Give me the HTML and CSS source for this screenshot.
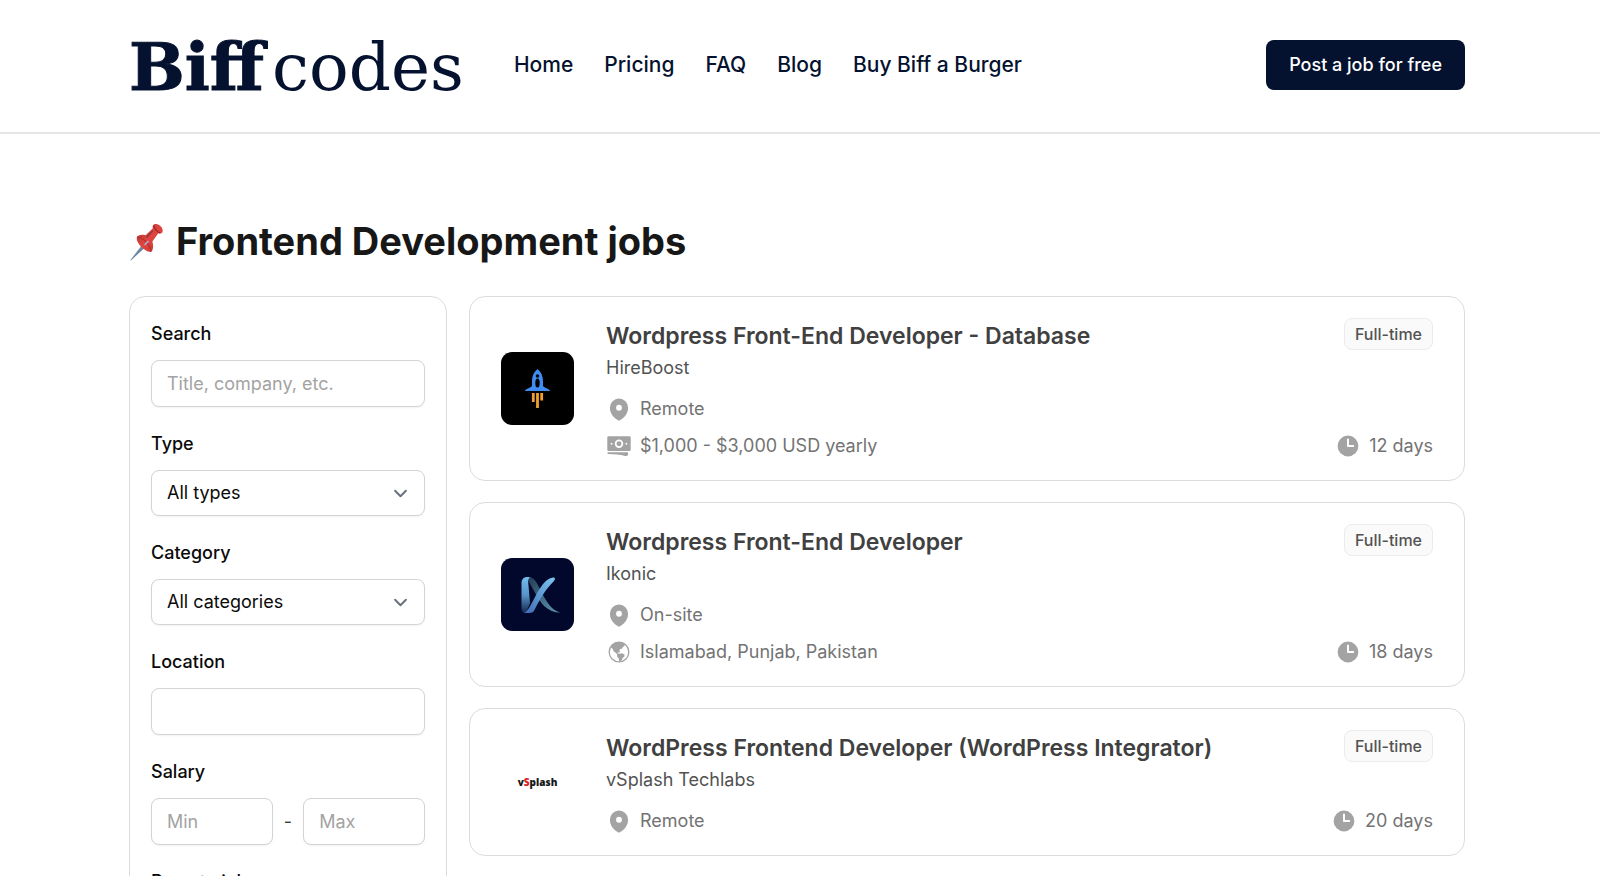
FILE: index.html
```html
<!DOCTYPE html>
<html lang="en">
<head>
<meta charset="utf-8">
<meta name="viewport" content="width=device-width, initial-scale=1">
<title>Frontend Development jobs | Biff codes</title>
<link rel="stylesheet" href="styles.css">
</head>
<body>
<svg class="sprite" aria-hidden="true">
  <symbol id="pin" viewBox="0 0 20 20"><path fill-rule="evenodd" d="M9.69 18.933l.003.001C9.89 19.02 10 19 10 19s.11.02.308-.066l.002-.001.006-.003.018-.008a5.741 5.741 0 00.281-.14c.186-.096.446-.24.757-.433.62-.384 1.445-.966 2.274-1.765C15.302 14.988 17 12.493 17 9A7 7 0 103 9c0 3.492 1.698 5.988 3.355 7.584a13.731 13.731 0 002.273 1.765 11.842 11.842 0 00.976.544l.062.029.018.008.006.003zM10 11.25a2.25 2.25 0 100-4.5 2.25 2.25 0 000 4.5z"/></symbol>
  <symbol id="cash" viewBox="0 0 20 20"><path fill-rule="evenodd" d="M2 2.500h16a1 1 0 011 1v9.300a1 1 0 01-1 1H2a1 1 0 01-1-1V3.500a1 1 0 011-1zM13.250 8.250a3.250 3.250 0 11-6.500 0 3.250 3.250 0 016.500 0zM4.300 8.950a.7.7 0 100-1.400.7.7 0 000 1.400zm12.100-.7a.7.7 0 11-1.400 0 .7.7 0 011.400 0z"/><circle cx="10" cy="8.250" r="1.900"/><path d="M1.750 14.900c-.9 0-.9 1.300 0 1.300 4.600 0 8.900.550 13 1.500 1.300.3 2.300-.4 2.300-1.500v-.7q0-.6-.6-.6z"/></symbol>
  <symbol id="globe" viewBox="0 0 20 20"><circle cx="10" cy="10" r="7.550" fill="none" stroke="currentColor" stroke-width="1"/><path d="M3.600 6.300C5 3.700 7.300 2.300 10 2.300c1.800 0 3.200.4 4.400 1.200l-.2 1.800-1.300.9-.4 1.200-1.300.3-1.100 1.200.8.7-.5.8-1.300-.3-.3.900 1.600.3 1.700-.4 2.200 1.100-.3 1.700-1.200 1-.5 1.500-1.300 1.200-.9-.3-.3-2.300-1.300-1.300.1-1.600-1-1.100-1.700-1.400-.7-1.800z"/></symbol>
  <symbol id="clock" viewBox="0 0 20 20"><path fill-rule="evenodd" d="M10 18a8 8 0 100-16 8 8 0 000 16zm.75-13a.75.75 0 00-1.5 0v5c0 .414.336.75.75.75h4a.75.75 0 000-1.5h-3.25V5z"/></symbol>
</svg>

<header class="header">
  <div class="container header-row">
    <a class="brand" href="#" aria-label="Biff codes"><span class="brand-bold">Biff</span><span class="brand-light">codes</span></a>
    <nav class="nav" aria-label="Main">
      <a href="#">Home</a>
      <a href="#">Pricing</a>
      <a href="#">FAQ</a>
      <a href="#">Blog</a>
      <a href="#">Buy Biff a Burger</a>
    </nav>
    <button class="post-button" type="button">Post a job for free</button>
  </div>
</header>

<main class="container main">
  <h1 class="title">
    <svg class="pushpin" viewBox="0 0 40 40" aria-hidden="true">
      <defs>
        <linearGradient id="red" x1="0" y1="0" x2="1" y2="1"><stop offset="0" stop-color="#a93230"/><stop offset=".5" stop-color="#e2453e"/><stop offset="1" stop-color="#c22f2d"/></linearGradient>
        <linearGradient id="steel" x1="0" y1="0" x2="1" y2="1"><stop offset="0" stop-color="#a9c9ea"/><stop offset="1" stop-color="#33445c"/></linearGradient>
      </defs>
      <path d="M14.500 22 17.500 25 2 39.500 1.500 39z" fill="url(#steel)"/>
      <path d="M8 16c1-3 5-3.500 9-2.500l7.500-7c-.8-2.500.5-4.500 3-4.500 4 0 7.500 4 7 7.500-.4 2.300-2.500 2.800-4.500 2l-6 8.500c1.200 4.500 1 9-1.500 10.800C18 31.500 7 22.500 8 16z" fill="url(#red)"/>
      <path d="M8.300 15.500c2-.5 6 1.500 9.500 5 3 3.200 5 7.500 4.500 10" fill="none" stroke="#a32a2b" stroke-width="1"/>
      <path d="M25 3.500c1.500 3.500 4 6.500 7 7.800" fill="none" stroke="#9b2528" stroke-width="1.200"/>
      <path d="m24.500 9-6.500 7" fill="none" stroke="#8d3a48" stroke-width="1.500"/>
      <path d="m16 23.500 4-4" stroke="#a5b6dc" stroke-width="1.500"/>
    </svg>
    Frontend Development jobs
  </h1>

  <div class="columns">
    <form class="filters">
      <div class="field"><label for="search">Search</label><input id="search" type="text" placeholder="Title, company, etc."></div>
      <div class="field"><label for="type">Type</label><select id="type"><option>All types</option></select></div>
      <div class="field"><label for="category">Category</label><select id="category"><option>All categories</option></select></div>
      <div class="field"><label for="location">Location</label><input id="location" type="text"></div>
      <div class="field"><label for="min">Salary</label>
        <div class="range"><input id="min" type="text" placeholder="Min"><span>-</span><input type="text" placeholder="Max" aria-label="Maximum salary"></div>
      </div>
      <div class="field"><label for="remote">Remote job</label><select id="remote"><option>All</option></select></div>
    </form>

    <div class="jobs">
      <article class="job">
        <svg class="logo" viewBox="0 0 73 73" role="img" aria-label="HireBoost">
          <rect width="73" height="73" fill="#000"/>
          <path fill="#3f8cf3" d="M36.500 17c3.700 3 5.500 7 5.500 12v5c1.500 2 7 3 7 5H24c0-2 5.500-3 7-5v-5c0-5 1.800-9 5.500-12z"/>
          <circle cx="36.500" cy="24" r="1.800"/><ellipse cx="36.500" cy="31" rx="2.200" ry="4.500"/>
          <path stroke="#f0a030" stroke-width="2.800" d="M32.300 41v9M36.500 41v15M40.700 41v7.500"/>
        </svg>
        <div class="info">
          <h2><a href="#">Wordpress Front-End Developer - Database</a></h2>
          <p class="company">HireBoost</p>
          <p class="meta"><svg class="icon"><use href="#pin"/></svg>Remote</p>
          <p class="meta"><svg class="icon"><use href="#cash"/></svg>$1,000 - $3,000 USD yearly</p>
        </div>
        <div class="side"><span class="badge">Full-time</span><p class="meta"><svg class="icon"><use href="#clock"/></svg>12 days</p></div>
      </article>

      <article class="job">
        <svg class="logo" viewBox="0 0 73 73" role="img" aria-label="Ikonic">
          <defs>
            <linearGradient id="band" x1="0" y1="0" x2="0" y2="1"><stop offset="0" stop-color="#73bdf0"/><stop offset=".5" stop-color="#5794c8"/><stop offset="1" stop-color="#14254f"/></linearGradient>
            <linearGradient id="sweep" x1="1" y1="0" x2="0" y2="1"><stop offset="0" stop-color="#7cc6f1"/><stop offset="1" stop-color="#3f68b5"/></linearGradient>
            <linearGradient id="tail" x1="0" y1="0" x2="1" y2="1"><stop offset="0" stop-color="#243a52"/><stop offset="1" stop-color="#5e98b5"/></linearGradient>
          </defs>
          <rect width="73" height="73" fill="#01082b"/>
          <path fill="url(#tail)" d="M27 19c6-1 9 6 13 14 5 10 10 19 19 21.500C51 55 42 49 37 40l-9-16z"/>
          <path fill="url(#band)" d="M20.500 24c.5-4 4-6 8.500-4.500-2 1-2 4-1.500 8L29 45l-4 10c-3.500 0-4.500-2-4.500-6z"/>
          <path fill="url(#sweep)" d="M22.500 55c5-1.500 7.500-9 11.500-16 5-9 10-18.500 18-19.500 2.500-.2 2.500 2 .5 4C44 32 39 41 34 51c-1.500 3-3 4-6 4z"/>
        </svg>
        <div class="info">
          <h2><a href="#">Wordpress Front-End Developer</a></h2>
          <p class="company">Ikonic</p>
          <p class="meta"><svg class="icon"><use href="#pin"/></svg>On-site</p>
          <p class="meta"><svg class="icon"><use href="#globe"/></svg>Islamabad, Punjab, Pakistan</p>
        </div>
        <div class="side"><span class="badge">Full-time</span><p class="meta"><svg class="icon"><use href="#clock"/></svg>18 days</p></div>
      </article>

      <article class="job">
        <div class="logo wordmark"><span>v<b>S</b>plash</span></div>
        <div class="info">
          <h2><a href="#">WordPress Frontend Developer (WordPress Integrator)</a></h2>
          <p class="company">vSplash Techlabs</p>
          <p class="meta"><svg class="icon"><use href="#pin"/></svg>Remote</p>
        </div>
        <div class="side"><span class="badge">Full-time</span><p class="meta"><svg class="icon"><use href="#clock"/></svg>20 days</p></div>
      </article>
    </div>
  </div>
</main>
</body>
</html>
```
FILE: styles.css
```css
* {
  box-sizing: border-box;
  margin: 0;
  padding: 0;
}

body {
  background: #fff;
  color: #171717;
  font: 400 18px/26px Inter, sans-serif;
}

a {
  color: inherit;
  text-decoration: none;
}

.sprite {
  display: none;
}

.container {
  max-width: 1400px;
  margin: 0 auto;
  padding: 0 35px 0 29px;
}

.header {
  border-bottom: 2px solid #e5e5e5;
  color: #04122f;
}

.header-row {
  display: flex;
  align-items: center;
  padding-top: 40px;
  padding-bottom: 42px;
}

.brand {
  display: flex;
  align-items: baseline;
  gap: 8px;
  margin-right: 50px;
  padding-top: 4px;
  font-family: "DejaVu Serif", serif;
  font-size: 66px;
  line-height: 44px;
}

.brand-bold {
  font-weight: 700;
  -webkit-text-stroke: 1px currentColor;
}

.nav {
  display: flex;
  gap: 31px;
  font-size: 21px;
  font-weight: 500;
}

.post-button {
  height: 50px;
  margin-left: auto;
  padding: 0 23px;
  border: 0;
  border-radius: 8px;
  background: #04122f;
  color: #fff;
  font: 500 18px/26px Inter, sans-serif;
}

.main {
  padding-top: 84px;
}

.title {
  display: flex;
  align-items: center;
  gap: 8px;
  margin-bottom: 32px;
  font-size: 38px;
  line-height: 46px;
  font-weight: 700;
}

.pushpin {
  width: 39px;
  height: 39px;
}

.columns {
  display: grid;
  grid-template-columns: 318px minmax(0, 1fr);
  gap: 22px;
}

.filters,
.job {
  border: 1px solid #dcdcdc;
  border-radius: 16px;
}

.filters {
  display: grid;
  gap: 24px;
  padding: 24px 21px;
}

.field {
  display: grid;
  gap: 13px;
}

.field label {
  color: #0a0a0a;
  font-weight: 500;
}

.field input,
.field select {
  width: 100%;
  min-width: 0;
  height: 47px;
  padding: 0 15px;
  border: 1px solid #d4d4d4;
  border-radius: 8px;
  background: #fff;
  box-shadow: 0 1px 2px rgb(0 0 0 / 5%);
  color: #0a0a0a;
  font: inherit;
}

.field select {
  height: 46px;
  appearance: none;
  background: #fff url("data:image/svg+xml,%3Csvg xmlns='http://www.w3.org/2000/svg' fill='none' viewBox='0 0 20 20'%3E%3Cpath stroke='%236b7280' stroke-linecap='round' stroke-linejoin='round' stroke-width='1.5' d='M6 8l4 4 4-4'/%3E%3C/svg%3E") no-repeat right 10px center / 27px;
}

.field input::placeholder {
  color: #a3a3a3;
}

.range {
  display: flex;
  align-items: center;
  gap: 11px;
  color: #404040;
}

.jobs {
  display: grid;
  gap: 21px;
  align-content: start;
}

.job {
  display: flex;
  gap: 32px;
  padding: 21px 31px;
}

.logo {
  flex: none;
  align-self: center;
  width: 73px;
  height: 73px;
  border-radius: 11px;
}

.wordmark {
  display: grid;
  place-items: center;
  color: #171717;
  font: 800 10px/16px "Open Sans", sans-serif;
}

.wordmark b {
  color: #dc2626;
}

.info {
  flex: 1;
}

.info h2 {
  color: #404040;
  font-size: 23px;
  line-height: 37px;
  font-weight: 600;
}

.company {
  margin-bottom: 15px;
  color: #525252;
}

.meta {
  display: flex;
  align-items: center;
  gap: 8px;
  color: #737373;
}

.meta + .meta {
  margin-top: 11px;
}

.icon {
  flex: none;
  width: 26px;
  height: 26px;
  color: #a3a3a3;
  fill: currentColor;
}

.side {
  display: flex;
  flex-direction: column;
  align-items: flex-end;
  justify-content: space-between;
}

.badge {
  padding: 2px 10px;
  border: 1px solid #ebebeb;
  border-radius: 8px;
  background: #fafafa;
  color: #525252;
  font-size: 16px;
  font-weight: 500;
}
```
